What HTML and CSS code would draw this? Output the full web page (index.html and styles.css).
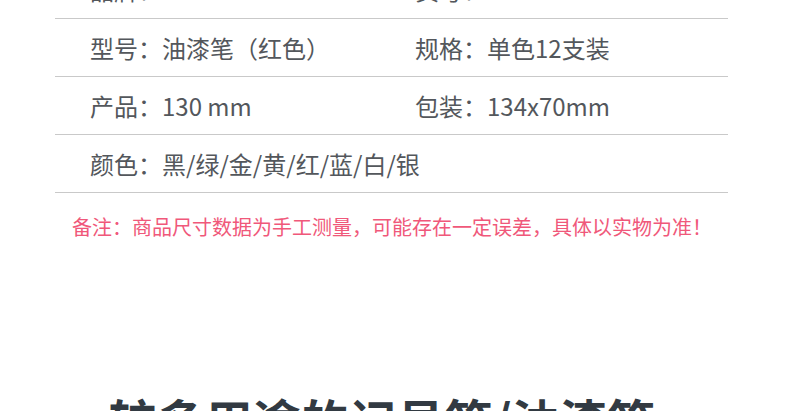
FILE: index.html
```html
<!DOCTYPE html>
<html lang="zh-CN">
<head>
    <meta charset="UTF-8">
    <meta name="viewport" content="width=device-width, initial-scale=1.0">
    <title>油漆笔 参数</title>
    <link rel="stylesheet" href="styles.css">
</head>
<body>

    <div class="specs">
        <div class="row">
            <div class="cell">品牌：4070</div>
            <div class="cell">货号：S576</div>
        </div>
        <div class="row">
            <div class="cell">型号：油漆笔（红色）</div>
            <div class="cell">规格：单色12支装</div>
        </div>
        <div class="row">
            <div class="cell">产品：130 mm</div>
            <div class="cell">包装：134x70mm</div>
        </div>
        <div class="row">
            <div class="cell wide">颜色：黑/绿/金/黄/红/蓝/白/银</div>
        </div>
    </div>

    <p class="note">备注：商品尺寸数据为手工测量，可能存在一定误差，具体以实物为准！</p>

    <h1 class="title">较多用途的记号笔/油漆笔</h1>

</body>
</html>
```

FILE: styles.css
```css
body { margin: 0; background: #fff; font-family: "Noto Sans CJK SC", "Noto Sans", sans-serif; overflow: hidden; }
.specs { width: 673px; margin: -39px 0 0 55px; }
.row { display: grid; grid-template-columns: 325px 1fr; height: 57px; align-items: center; padding-left: 35px; border-bottom: 1.5px solid #c9c9c9; font-size: 24px; color: #53575c; }
.wide { grid-column: 1 / -1; }
.note { margin: 20px 0 0 72px; font-size: 20px; color: #f0587a; line-height: 28px; }
.title { margin: 148px 0 0; padding-right: 26px; text-align: center; font-size: 48px; font-weight: 700; color: #323a42; line-height: 60px; }
```
